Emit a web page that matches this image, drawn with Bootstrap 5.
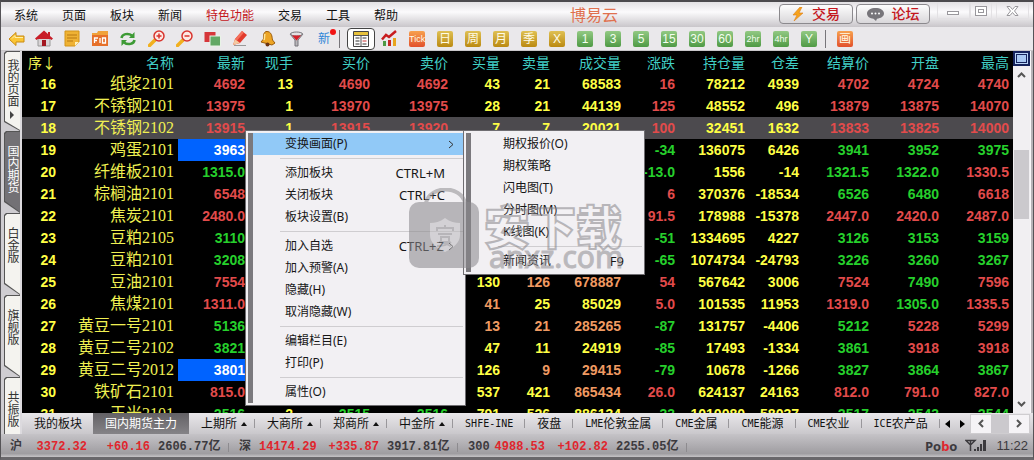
<!DOCTYPE html>
<html lang="zh-CN">
<head>
<meta charset="utf-8">
<meta name="viewport" content="width=device-width, initial-scale=1">
<title>博易云</title>
<link href="https://cdn.jsdelivr.net/npm/bootstrap@5.3.0/dist/css/bootstrap.min.css" rel="stylesheet">
<style>
  body { font: 12px/16px "Liberation Sans", "Noto Sans CJK SC", sans-serif; color: #111; background: #e9e7ea; }
  button { font: inherit; color: inherit; background: none; border: 0; padding: 0; white-space: nowrap; }
  svg { display: block; }
  .app { height: 100vh; border: 1px solid #555357; border-top: 2px solid #4b494d; border-bottom: 3px solid #69676b; }

  .menubar { height: 25px; background: linear-gradient(#e2e0e3, #fbfafc 40%, #c9c6ca); padding-left: 1px; }
  .menubar nav button { padding: 0 12px; line-height: 28px; }
  .menubar nav { height: 25px; }
  .menubar nav .hot { color: #c4161c; }
  .brand { color: #e0714f; font: 16px/24px "Noto Sans CJK SC", sans-serif; left: 569px; top: 0; }
  .pill { width: 74px; height: 20px; margin: 2px 3px 0 0; border: 1px solid #8b898d; border-radius: 4px; background: linear-gradient(#fdfdfd, #d9d7da); color: #c4161c; font-size: 14px; font-weight: 500; gap: 8px; }
  .winbtn { width: 33px; height: 17px; border: 1px solid #e3e1e4; border-top: 0; }
  .winbtn svg { margin: auto; }

  .toolbar { height: 24px; background: #eae8eb; padding-left: 1px; border-bottom: 1px solid #c9c7ca; }
  .toolbar button { width: 28px; height: 22px; display: flex; align-items: center; justify-content: center; }
  .toolbar .on { background: #fff; border: 1px solid #444; border-radius: 4px; }
  .rule { width: 8px; height: 18px; border-left: 1px solid #77757a; margin: 0 0 0 1px; flex: none; }
  .rule.r-last { width: 6px; margin-left: 2px; }
  .tile { width: 16px; height: 16px; border-radius: 2px; color: #fffbe6; font-size: 12px; line-height: 16px; text-align: center; background: linear-gradient(#dfc053, #bb8a12); overflow: hidden; }
  .tile.grn { background: linear-gradient(#92c983, #4f9a45); color: #f4fff0; }
  .tile.org { background: linear-gradient(#f7a14e, #e2512c); }
  .tile.slim { font-family: "Liberation Sans Narrow", "Liberation Sans", sans-serif; font-size: 9px; }
  .tile.slim.thin { font-size: 8px; }

  .side { width: 21px; flex: none; background: #cfcdd1; border-right: 2px solid #dcdade; padding-left: 3px; }
  .vtab { position: relative; flex: none; height: 82px; width: 16px; color: #333; background: #555; display: flex; flex-direction: column; align-items: center; padding-top: 14px; line-height: 12px; isolation: isolate; clip-path: polygon(0 2px, 2px 0, 100% 0, 100% 100%, 0 71px); }
  .vtab::before { content: ""; position: absolute; z-index: -1; inset: 1px 0 1px 1px; background: #f4f3ef; clip-path: polygon(0 2px, 2px 0, 100% 0, 100% 100%, 0 69px); }
  .vtab.on { color: #fff; }
  .vtab.on::before { background: #737175; }
  .vtab.first { padding-top: 8px; height: 80px; }
  .vtab span { writing-mode: vertical-rl; width: 12px; line-height: 12px; }

  .board { background: #000; min-width: 0; }
  .quotes { width: 100%; table-layout: fixed; border-collapse: collapse; font: bold 14px/22px "Liberation Sans", sans-serif; text-align: right; }
  .quotes th, .quotes td { height: 22px; padding: 0 4px 0 0; white-space: nowrap; }
  .quotes th { color: #40cfc6; font: 14px/22px "Noto Sans CJK SC", sans-serif; }
  .quotes th:first-child { color: #f0f052; }
  .quotes td.nm { font: 16px/22px "Liberation Serif", "Noto Sans CJK SC", serif; color: #f0f052; }
  .quotes .sel { background: #4c4a4e; }
  .y { color: #ffff45; } .r { color: #e24b4b; } .g { color: #26d02c; } .o { color: #f09a62; }
  .quotes .hit { background: #0063ff; color: #fff; }

  .vscroll { width: 17px; flex: none; background: #f1eff2; }
  .vscroll button { width: 17px; height: 18px; display: grid; place-items: center; }
  .vscroll .box { height: 15px; background: #b9d3f5; border: 2px solid #16235c; }
  .thumb { background: #cbc9cd; height: 69px; margin: 66px 1px 0; }
  .edge { width: 3px; flex: none; background: #b5b3b7; border-left: 1px solid #f8f7f9; }

  .sheets { height: 21px; background: linear-gradient(#e9e7ea, #c9c7cb); }
  .sheets button { position: relative; padding: 0 12px; line-height: 20px; display: flex; align-items: center; flex: none; }
  .sheets > button { padding-top: 1px; }
  .sheets button.sep::after { content: ""; position: absolute; right: 0; top: 6px; height: 9px; border-right: 1px solid #99979b; }
  .sheets button.grp { padding-right: 8px; gap: 4px; }
  .sheets button.on { background: linear-gradient(#636165, #858387); color: #fff; align-self: stretch; margin-left: -1px; }
  .sheets button.arr { padding: 0 5px; }
  .sheets i { border: 3px solid transparent; border-bottom: 4px solid #111; border-top: 0; }
  .lat { font: 10px/20px "DejaVu Sans Mono", monospace; }
  .hscroll { width: 60px; background: #f5f3f6; border: 1px solid #cfcdd0; }
  .hscroll b { width: 18px; background: #cbc9cd; align-self: stretch; }
  .hscroll button { width: 20px; height: 18px; padding: 0; justify-content: center; }

  .status { height: 23px; background: linear-gradient(#c5c3c7, #9f9da1 85%, #c5c3c6); color: #3c3a3e; padding: 0 5px 0 9px; font: bold 12px/26px "Liberation Mono", "Noto Sans CJK SC", monospace; }
  .idx { display: grid; grid-template-columns: 20px 57px 63px 79px; width: 229px; text-align: right; white-space: nowrap; flex: none; }
  .idx :first-child { text-align: left; }
  .idx :last-child { text-align: left; padding-left: 8px; background: linear-gradient(#8d8b8f, #8d8b8f) 100% 9px / 1px 9px no-repeat; }
  .idx em { font-style: normal; color: #e0262d; }
  .pobo { font: bold 13px/24px "Open Sans", sans-serif; }
  .pobo span { color: #e0262d; }
  .clock { font: 13px/24px "Liberation Sans", sans-serif; }

  .popup { position: absolute; background: #f2f0f3; border: 1px solid #6f6d71; padding: 2px; font: 12px/22px "Noto Sans", "Noto Sans CJK SC", sans-serif; z-index: 5; }
  .popup > div { border-left: 5px solid #7b797d; }
  .popup button { display: flex; justify-content: space-between; align-items: center; width: 100%; height: 22px; padding: 0 18px 0 32px; text-align: left; color: #161616; }
  .popup kbd { background: none; color: inherit; padding: 0; font: 13px/22px "Noto Sans", sans-serif; }
  .popup .hl { background: #91c9f7; }
  .popup .more { padding-right: 9px; }
  .popup .more kbd { margin-left: auto; margin-right: 4px; }
  .popup hr { margin: 3px 0 3px 27px; border: 0; border-top: 1px solid #cfcdd0; opacity: 1; }
  #ctx { left: 244px; top: 128px; width: 221px; }
  #sub { left: 462px; top: 128px; width: 182px; }
  .stamp { position: absolute; left: 407px; top: 186px; z-index: 9; pointer-events: none; opacity: .56; }
</style>
</head>
<body>
<div class="app d-flex flex-column position-relative overflow-hidden">
  <header class="menubar d-flex position-relative flex-shrink-0">
    <nav class="d-flex"><button>系统</button><button>页面</button><button>板块</button><button>新闻</button><button class="hot">特色功能</button><button>交易</button><button>工具</button><button>帮助</button></nav>
    <div class="brand position-absolute">博易云</div>
    <div class="d-flex ms-auto">
      <button class="pill d-flex align-items-center justify-content-center"><svg width="12" height="14" viewBox="0 0 12 14"><path d="M8 0 1 8h4l-3 6 9-8H7l3-6z" fill="#f6a31c" stroke="#dd7d14" stroke-width=".6"/></svg>交易</button>
      <button class="pill d-flex align-items-center justify-content-center"><svg width="17" height="13" viewBox="0 0 17 13"><path d="M8.500 0C4 0 0 2 0 5.500c0 3 3 5 6.500 5.300L9 13l1-2.300c4-.5 7-2.200 7-5.200C17 2 13 0 8.500 0z" fill="#77757a"/><g fill="#fff"><circle cx="5" cy="5.500" r="1"/><circle cx="8.500" cy="5.500" r="1"/><circle cx="12" cy="5.500" r="1"/></g></svg>论坛</button>
      <button class="winbtn ms-1" aria-label="最小化"><svg width="13" height="13" fill="#fff" stroke="#99979c"><rect x=".5" y="7.500" width="11" height="3"/></svg></button>
      <button class="winbtn" style="width:22px" aria-label="最大化"><svg width="13" height="13" fill="#fff" stroke="#99979c"><rect x=".5" y="2.500" width="11" height="9"/><rect x="3.500" y="5.500" width="5" height="3"/></svg></button>
      <button class="winbtn me-1 ms-1" aria-label="关闭"><svg width="13" height="13" viewBox="0 0 13 13" fill="#fff" stroke="#99979c"><path d="M1 2.500h3l2.500 3 2.500-3h3L8.500 7l3.500 4.500H9l-2.500-3-2.500 3H1L4.500 7z"/></svg></button>
    </div>
  </header>

  <div class="toolbar d-flex align-items-center flex-shrink-0">
    <button aria-label="后退"><svg width="17" height="16" viewBox="0 0 17 16"><path d="M1 8 8 1.500V5h8v6H8v3.500z" fill="#fbc534" stroke="#c98a12"/><path d="M4 7.500 7 4.500V6.500h8" fill="none" stroke="#fff0a8"/></svg></button>
    <button aria-label="首页"><svg width="18" height="17" viewBox="0 0 18 17"><path d="M3 8v8h12V8L9 3z" fill="#d9d4d6" stroke="#999"/><path d="M9 .5 0 8.500l1.500 1.500L9 4l7.500 6L18 8.500 15 6V2h-2v2z" fill="#c81d28"/><path d="M9 2.500 3 8v1h12V8z" fill="#c81d28"/><path d="M7 10h4v6H7z" fill="#a3161f"/></svg></button>
    <button aria-label="便笺"><svg width="16" height="17" viewBox="0 0 16 17"><path d="M1 1h14v11l-4 4H1z" fill="#efb234" stroke="#d39418"/><path d="M3 5h10M3 8h10M3 11h6" stroke="#b87912"/><path d="M11 16v-4h4z" fill="#fff1bd"/></svg></button>
    <button aria-label="F10"><svg width="18" height="17" viewBox="0 0 18 17"><path d="M1 3h5l1-2h10v15H1z" fill="#f0a23a"/><path d="M1 5h16v11H1z" fill="#e6702a"/><path d="M3.500 13V8H7M3.500 10.500H6M9 8v5M11.500 8h3v5h-3z" fill="none" stroke="#fff" stroke-width="1.300"/></svg></button>
    <button aria-label="刷新"><svg width="16" height="16" viewBox="0 0 16 16" fill="none" stroke="#3d9a35" stroke-width="2.500"><path d="M1.500 7C2 3 8 1.500 12 4.500M14.500 9C14 13 8 14.500 4 11.500"/><path d="M14.500 1v6H9zM1.500 15V9H7z" fill="#3d9a35" stroke="none"/></svg></button>
    <button aria-label="放大"><svg width="17" height="17" viewBox="0 0 17 17"><path d="M1.500 15.500 7 10" stroke="#f1b01f" stroke-width="3.500" stroke-linecap="round"/><circle cx="11" cy="6" r="5" fill="#fde9e4" stroke="#d8342e" stroke-width="1.500"/><path d="M8.500 6h5M11 3.500v5" stroke="#d8342e" stroke-width="1.500"/></svg></button>
    <button aria-label="缩小"><svg width="17" height="17" viewBox="0 0 17 17"><path d="M1.500 15.500 7 10" stroke="#f1b01f" stroke-width="3.500" stroke-linecap="round"/><circle cx="11" cy="6" r="5" fill="#fde9e4" stroke="#d8342e" stroke-width="1.500"/><path d="M8.500 6h5" stroke="#d8342e" stroke-width="1.500"/></svg></button>
    <button aria-label="叠加"><svg width="17" height="16" viewBox="0 0 17 16"><rect x=".5" y="1" width="11" height="10" fill="#d6363a"/><rect x="6" y="5" width="10.500" height="10" fill="#63a866" stroke="#e8f3e6"/></svg></button>
    <button aria-label="画线"><svg width="16" height="17" viewBox="0 0 16 17"><path d="M1 15 3 9 10 1l5 4L8 13z" fill="#e23a2c"/><path d="M1 15 3 9l5 4z" fill="#f4c9a0"/><path d="M3 9l7-8 2 1.500-7 8z" fill="#f4705c"/><path d="M2 15.500h12" stroke="#999"/></svg></button>
    <button aria-label="预警"><svg width="16" height="17" viewBox="0 0 16 17"><path d="M6 1.500C12 1 12 7 12.500 10l2.500 3-3 2-11-3 2.500-3C3.500 6 3 3 6 1.500z" fill="#eca424" stroke="#9c5c0a"/><path d="M5 4c-1 2 0 4-1 6" stroke="#ffe79a" fill="none" stroke-width="1.500"/><circle cx="7.500" cy="14.500" r="2" fill="#6d3310"/></svg></button>
    <button aria-label="筛选"><svg width="15" height="16" viewBox="0 0 15 16"><path d="M1 3h13L9 9v6H6V9z" fill="#b8b6ba" stroke="#77757a"/><ellipse cx="7.500" cy="3" rx="6" ry="2" fill="#e3e1e4" stroke="#77757a"/><path d="M3 4.500h9L7.500 9.500z" fill="#d6202a"/></svg></button>
    <button class="position-relative" style="color:#2f86d8">新<svg class="position-absolute top-0 end-0" width="9" height="9"><circle cx="4" cy="4" r="3" fill="#f21414"/></svg></button>
    <span class="rule"></span>
    <button class="on" aria-label="报价表"><svg width="16" height="16" viewBox="0 0 16 16"><path d="M.5.500h15v15H.500z" fill="#fff" stroke="#444"/><path d="M1 1h14v3H1z" fill="#e8c23c"/><path d="M1 4.500h14M8 4v11" stroke="#555"/><path d="M2.500 7h4M2.500 10h4M2.500 13h4M9.500 7h4M9.500 13h4" stroke="#333"/><path d="M9.500 10h4" stroke="#c33"/></svg></button>
    <button aria-label="走势图"><svg width="17" height="17" viewBox="0 0 17 17"><path d="M2 11h3v5H2z" fill="#4d9a45"/><path d="M7 10h3v6H7z" fill="#c62828"/><path d="M12 8h3v8h-3z" fill="#e8a41e"/><path d="M1 9.500 5 5l3 2 7-6" fill="none" stroke="#c81d20" stroke-width="2.500"/></svg></button>
    <button><span class="tile org slim">Tick</span></button>
    <button><span class="tile">日</span></button><button><span class="tile">周</span></button><button><span class="tile">月</span></button><button><span class="tile">季</span></button><button><span class="tile">X</span></button>
    <button><span class="tile grn">1</span></button><button><span class="tile grn">3</span></button><button><span class="tile grn">5</span></button><button><span class="tile grn">15</span></button><button><span class="tile grn">30</span></button><button><span class="tile grn">60</span></button>
    <button><span class="tile grn slim">2hr</span></button><button><span class="tile grn slim">4hr</span></button><button><span class="tile grn">Y</span></button>
    <span class="rule r-last"></span>
    <button><span class="tile org">画</span></button>
  </div>

  <div class="d-flex flex-fill" style="min-height:0">
    <aside class="side d-flex flex-column overflow-hidden">
      <button class="vtab first"><span>我的页面</span><svg class="mt-1" width="6" height="8"><path d="M1 0 5 4 1 8z" fill="#444"/></svg></button>
      <button class="vtab on"><span>国内期货</span></button>
      <button class="vtab"><span>白金版</span></button>
      <button class="vtab"><span>旗舰版</span></button>
      <button class="vtab"><span>共振版</span></button>
    </aside>

    <div class="d-flex flex-column flex-fill" style="min-width:0">
      <div class="d-flex flex-fill" style="min-height:0">
        <main class="board flex-fill overflow-hidden">
          <table class="quotes">
            <colgroup><col style="width:38px"><col style="width:118px"><col style="width:71px"><col style="width:48px"><col style="width:77px"><col style="width:78px"><col style="width:52px"><col style="width:50px"><col style="width:71px"><col style="width:54px"><col style="width:70px"><col style="width:54px"><col style="width:70px"><col style="width:70px"><col style="width:70px"></colgroup>
            <thead><tr><th>序↓</th><th>名称</th><th>最新</th><th>现手</th><th>买价</th><th>卖价</th><th>买量</th><th>卖量</th><th>成交量</th><th>涨跌</th><th>持仓量</th><th>仓差</th><th>结算价</th><th>开盘</th><th>最高</th></tr></thead>
            <tbody id="rows"></tbody>
          </table>
        </main>
        <div class="vscroll d-flex flex-column">
          <button class="box" aria-label="窗口"><svg width="11" height="9"><rect x=".5" y=".5" width="10" height="8" fill="#a9c8f2" stroke="#16235c"/></svg></button>
          <button aria-label="上"><svg width="9" height="6" fill="none" stroke="#555" stroke-width="2"><path d="M1 5 4.500 1.500 8 5"/></svg></button>
          <div class="thumb"></div>
          <button class="mt-auto" aria-label="下"><svg width="9" height="6" fill="none" stroke="#555" stroke-width="2"><path d="M1 1 4.500 4.500 8 1"/></svg></button>
        </div>
        <div class="edge"></div>
      </div>

      <div class="sheets d-flex align-items-center">
        <button>我的板块</button><button class="on">国内期货主力</button>
        <button class="sep grp">上期所<i></i></button><button class="sep grp">大商所<i></i></button><button class="sep grp">郑商所<i></i></button><button class="sep grp">中金所<i></i></button>
        <button class="sep"><span class="lat">SHFE-INE</span></button><button class="sep">夜盘</button>
        <button class="sep"><span class="lat">LME</span>伦敦金属</button><button class="sep"><span class="lat">CME</span>金属</button><button class="sep"><span class="lat">CME</span>能源</button><button class="sep"><span class="lat">CME</span>农业</button><button class="sep"><span class="lat">ICE</span>农产品</button>
        <button class="arr" aria-label="左"><svg width="5" height="8"><path d="M5 0 0 4l5 4z"/></svg></button><button class="arr" aria-label="右"><svg width="5" height="8"><path d="M0 0l5 4-5 4z"/></svg></button>
        <div class="hscroll d-flex align-items-center ms-auto me-1"><button aria-label="左"><svg width="6" height="9" fill="none" stroke="#555" stroke-width="2"><path d="M5 1 1.500 4.500 5 8"/></svg></button><b></b><button aria-label="右"><svg width="6" height="9" fill="none" stroke="#555" stroke-width="2"><path d="M1 1 4.500 4.500 1 8"/></svg></button></div>
      </div>
    </div>
  </div>

  <footer class="status d-flex flex-shrink-0">
    <div class="idx"><span>沪</span><em>3372.32</em><em>+60.16</em><span>2606.77亿</span></div>
    <div class="idx"><span>深</span><em>14174.29</em><em>+335.87</em><span>3917.81亿</span></div>
    <div class="idx"><span>300</span><em>4988.53</em><em>+102.82</em><span>2255.05亿</span></div>
    <div class="d-flex ms-auto align-items-center">
      <span class="pobo">Po<span>b</span>o</span>
      <svg class="ms-2 me-2" width="23" height="13" viewBox="0 0 23 13"><path d="M1 1.500h9L5.500 6zM5.500 1v11" fill="none" stroke="#3c3a3e" stroke-width="1.500"/><path d="M9 10h2v2H9zM12 8h2v4h-2zM15 5h2v7h-2zM18 1h3v11h-3z" fill="#3c3a3e"/></svg>
      <span class="clock">11:22</span>
    </div>
  </footer>

  <div class="popup" id="ctx"><div>
    <button class="hl more">变换画面(P)<svg width="6" height="9" fill="none" stroke="#333"><path d="M1 1l4 3.500L1 8"/></svg></button>
    <hr>
    <button>添加板块<kbd>CTRL+M</kbd></button><button>关闭板块<kbd>CTRL+C</kbd></button><button>板块设置(B)</button>
    <hr>
    <button class="more">加入自选<kbd>CTRL+Z</kbd><svg width="6" height="9" fill="none" stroke="#333"><path d="M1 1l4 3.500L1 8"/></svg></button><button>加入预警(A)</button><button>隐藏(H)</button><button>取消隐藏(W)</button>
    <hr>
    <button>编辑栏目(E)</button><button>打印(P)</button>
    <hr>
    <button>属性(O)</button>
  </div></div>
  <div class="popup" id="sub"><div>
    <button>期权报价(O)</button><button>期权策略</button><button>闪电图(T)</button><button>分时图(M)</button><button>K线图(K)</button>
    <hr>
    <button>新闻资讯<kbd>F9</kbd></button>
  </div></div>

  <svg class="stamp" width="220" height="86" viewBox="0 0 220 86">
    <path d="M18 15C22 -3 53 -3 57 15" fill="none" stroke="#929094" stroke-width="4"/>
    <rect x="1" y="14" width="70" height="66" rx="10" fill="#8a888c"/>
    <path d="M37 30c5 4 10 5 15 5v12c0 8-7 13-15 17-8-4-15-9-15-17V35c5 0 10-1 15-5z" fill="#bcbabe"/>
    <path d="M29 43v-3h16v3M37 37v3M30 46h14M33 49h8v5h-8zM29 58c5 0 10-1 14-4M31 54c4 0 8 2 12 4" fill="none" stroke="#8a888c" stroke-width="2"/>
    <text x="76" y="56" font-family="Noto Sans CJK SC, sans-serif" font-weight="900" font-size="46" fill="#fff" fill-opacity=".2" stroke="#8a888c" stroke-width="2">安下载</text>
    <text x="81" y="80" font-family="Noto Sans, sans-serif" font-size="30" fill="#908e92" stroke="#908e92">anxz.com</text>
  </svg>
</div>

<script src="https://cdn.jsdelivr.net/npm/bootstrap@5.3.0/dist/js/bootstrap.bundle.min.js"></script>
<script>
  // One line per contract; a value starts with its colour letter, "h" marks a highlighted cell and "-" an empty one.
  const quotes = `
16 纸浆2101 r4692 y13 r4690 r4692 y43 y21 y68583 r16 y78212 y4939 r4702 r4724 r4740
17 不锈钢2101 r13975 y1 r13970 r13975 y28 y21 y44139 r125 y48552 y496 r13879 r13875 r14070
18 不锈钢2102 r13915 y1 r13915 r13920 y7 y7 y20021 r100 y32451 y1632 r13833 r13825 r14000
19 鸡蛋2101 h3963 - - - - - - g-34 y136075 y6426 g3941 g3952 g3975
20 纤维板2101 g1315.0 - - - - - - g-13.0 y1556 y-14 g1321.5 g1322.0 r1330.5
21 棕榈油2101 r6548 - - - - - - r6 y370376 y-18534 g6526 g6480 r6618
22 焦炭2101 r2480.0 - - - - - - r91.5 y178988 y-15378 r2447.0 r2420.0 r2487.0
23 豆粕2105 g3110 - - - - - - g-51 y1334695 y4227 g3126 g3153 g3159
24 豆粕2101 g3208 - - - - - - g-65 y1074734 y-24793 g3226 g3260 g3267
25 豆油2101 r7554 - - - y130 o126 o678887 r54 y567642 y3006 r7524 g7490 r7596
26 焦煤2101 r1311.0 - - - o41 y25 y85029 r5.0 y101535 y11953 r1319.0 g1305.0 r1335.5
27 黄豆一号2101 g5136 - - - o13 o21 o285265 g-87 y131757 y-4406 g5212 r5228 r5299
28 黄豆二号2102 g3821 - - - y47 y11 y24919 g-85 y17493 y-1334 g3861 r3918 r3918
29 黄豆二号2012 h3801 - - - y126 o9 o29415 g-79 y10678 y-1266 g3827 g3864 g3867
30 铁矿石2101 r815.0 - - - y537 y421 o865434 r26.0 y624137 y24163 r812.0 r791.0 r827.0
31 玉米2101 g2516 y2 g2515 g2516 y791 y526 y886134 g33 y1010080 y58037 g2517 g2543 g2544`;
  document.getElementById('rows').innerHTML = quotes.trim().split('\n').map(line => {
    const [no, name, ...vals] = line.split(' ');
    const cells = vals.map(v => v === '-' ? '<td></td>' : `<td class="${v[0] === 'h' ? 'hit' : v[0]}">${v.slice(1)}</td>`);
    return `<tr${no === '18' ? ' class="sel"' : ''}><td class="y">${no}</td><td class="nm">${name}</td>${cells.join('')}</tr>`;
  }).join('');
</script>
</body>
</html>
